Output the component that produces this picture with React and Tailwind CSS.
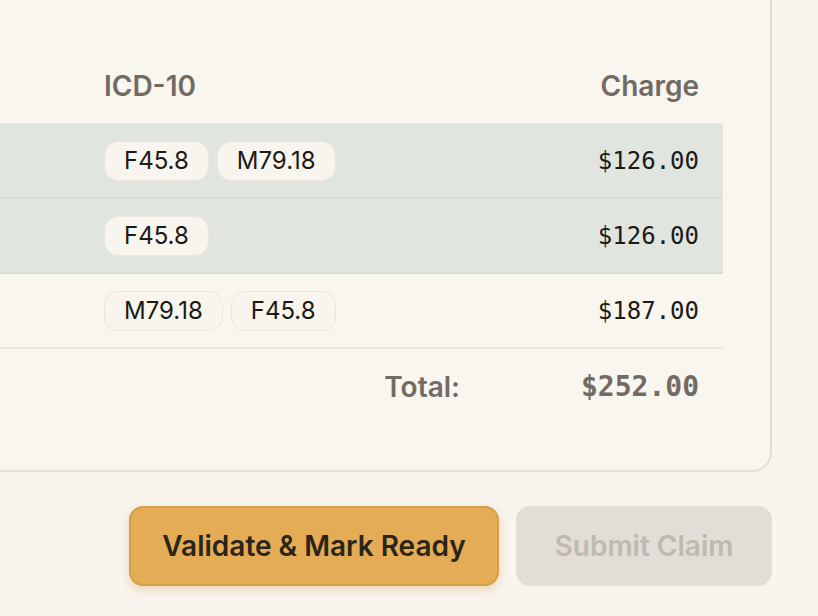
import React from "react";

const rows = [
  { codes: ["F45.8", "M79.18"], charge: "$126.00", flagged: true },
  { codes: ["F45.8"], charge: "$126.00", flagged: true },
  { codes: ["M79.18", "F45.8"], charge: "$187.00", flagged: false },
];

const sans = { fontFamily: "Inter, 'Noto Sans', sans-serif" };
const mono = { fontFamily: "'DejaVu Sans Mono', 'Liberation Mono', monospace" };

export default function App() {
  return (
    <div className="w-[818px] h-[616px] overflow-hidden bg-[#f8f4ee]" style={sans}>
      {/* Claim card */}
      <div className="-ml-[40px] -mt-[40px] mr-[46px] rounded-[20px] border-2 border-[#e4dfd2] bg-[#f9f5ef] pr-[47px] pb-[46px]">
        <div className="h-[87px]" />

        {/* Header */}
        <div className="flex h-[75px] items-center border-b border-[#ece7df] text-[28px] font-semibold text-[#716b63]">
          <div className="flex-1" />
          <div className="w-[405px] pl-6">ICD-10</div>
          <div className="w-[238px] pr-6 text-right">Charge</div>
        </div>

        {rows.map((r, i) => (
          <div
            key={i}
            className={
              r.flagged
                ? "flex h-[75px] items-center border-b-2 border-[#d7ddd5] bg-[#e0e6df]"
                : "flex h-[75px] items-center border-b-2 border-[#ece7df]"
            }
          >
            <div className="flex-1" />
            <div className="flex w-[405px] gap-[8px] pl-6">
              {r.codes.map((c, j) => (
                <span
                  key={j}
                  className="flex h-[40px] items-center rounded-[14px] border border-[#ebe5da] bg-[#f8f4ee] px-[19px] text-[24px] text-[#1c1a17]"
                >
                  {c}
                </span>
              ))}
            </div>
            <div className="w-[238px] pr-6 text-right text-[24px] text-[#1c1a17]" style={mono}>
              {r.charge}
            </div>
          </div>
        ))}

        {/* Total */}
        <div className="flex h-[75px] items-center justify-end">
          <div className="pr-[25px] text-[28px] font-semibold text-[#716b63]">Total:</div>
          <div className="w-[238px] pr-6 text-right text-[28px] font-bold text-[#716b63]" style={mono}>
            $252.00
          </div>
        </div>
      </div>

      {/* Actions */}
      <div className="mr-[46px] mt-[34px] flex justify-end gap-[17px]">
        <button className="flex h-[80px] w-[370px] items-center justify-center rounded-[14px] border-2 border-[#d59e48] bg-[#e3ac55] text-[28px] font-semibold text-[#2a2419] shadow-[0_4px_10px_rgba(214,160,80,0.35)]">
          Validate &amp; Mark Ready
        </button>
        <button className="flex h-[80px] w-[256px] items-center justify-center rounded-[14px] bg-[#e2ddd7] text-[28px] font-semibold text-[#bfb9b2]">
          Submit Claim
        </button>
      </div>
    </div>
  );
}
